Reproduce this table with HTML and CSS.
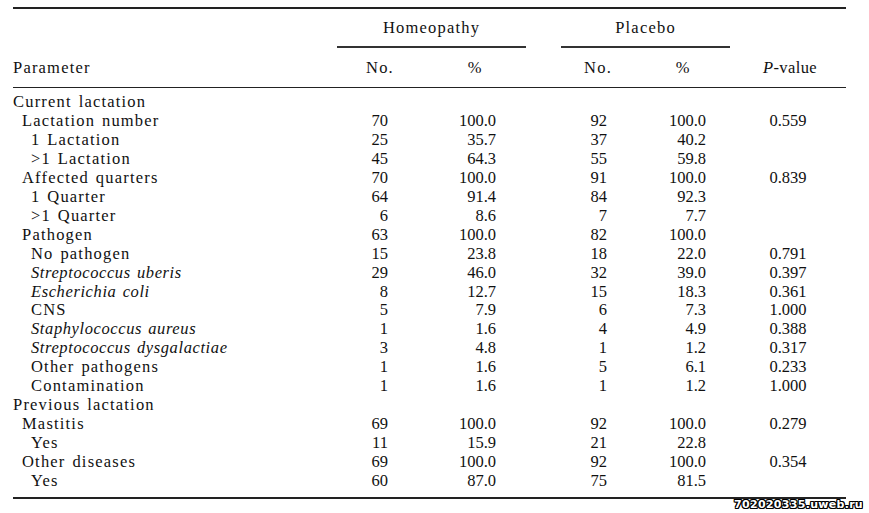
FILE: index.html
```html
<!DOCTYPE html>
<html lang="en">
<head>
<meta charset="utf-8">
<title>Table</title>
<link rel="stylesheet" href="styles.css">
</head>
<body>
<div class="page">
  <div class="wrap">
    <table class="tbl">
      <colgroup>
        <col class="c-param"><col class="c-hno"><col class="c-hpct"><col class="c-gap"><col class="c-pno"><col class="c-ppct"><col class="c-pv">
      </colgroup>
      <thead>
        <tr class="grp">
          <th></th>
          <th colspan="2" class="span lbl">Homeopathy</th>
          <th></th>
          <th colspan="2" class="span lbl">Placebo</th>
          <th></th>
        </tr>
        <tr class="sub">
          <th class="param lbl">Parameter</th>
          <th class="ctr lbl">No.</th>
          <th class="ctr">%</th>
          <th></th>
          <th class="ctr lbl">No.</th>
          <th class="ctr">%</th>
          <th class="pvh lbl"><i>P</i>-value</th>
        </tr>
      </thead>
      <tbody>
        <tr class="first"><td class="param lbl l0">Current lactation</td><td></td><td></td><td></td><td></td><td></td><td></td></tr>
        <tr><td class="param lbl l1">Lactation number</td><td class="n hno">70</td><td class="n hpct">100.0</td><td></td><td class="n pno">92</td><td class="n ppct">100.0</td><td class="pv">0.559</td></tr>
        <tr><td class="param lbl l2">1 Lactation</td><td class="n hno">25</td><td class="n hpct">35.7</td><td></td><td class="n pno">37</td><td class="n ppct">40.2</td><td class="pv"></td></tr>
        <tr><td class="param lbl l2">&gt;1 Lactation</td><td class="n hno">45</td><td class="n hpct">64.3</td><td></td><td class="n pno">55</td><td class="n ppct">59.8</td><td class="pv"></td></tr>
        <tr><td class="param lbl l1">Affected quarters</td><td class="n hno">70</td><td class="n hpct">100.0</td><td></td><td class="n pno">91</td><td class="n ppct">100.0</td><td class="pv">0.839</td></tr>
        <tr><td class="param lbl l2">1 Quarter</td><td class="n hno">64</td><td class="n hpct">91.4</td><td></td><td class="n pno">84</td><td class="n ppct">92.3</td><td class="pv"></td></tr>
        <tr><td class="param lbl l2">&gt;1 Quarter</td><td class="n hno">6</td><td class="n hpct">8.6</td><td></td><td class="n pno">7</td><td class="n ppct">7.7</td><td class="pv"></td></tr>
        <tr><td class="param lbl l1">Pathogen</td><td class="n hno">63</td><td class="n hpct">100.0</td><td></td><td class="n pno">82</td><td class="n ppct">100.0</td><td class="pv"></td></tr>
        <tr><td class="param lbl l2">No pathogen</td><td class="n hno">15</td><td class="n hpct">23.8</td><td></td><td class="n pno">18</td><td class="n ppct">22.0</td><td class="pv">0.791</td></tr>
        <tr><td class="param it l2">Streptococcus uberis</td><td class="n hno">29</td><td class="n hpct">46.0</td><td></td><td class="n pno">32</td><td class="n ppct">39.0</td><td class="pv">0.397</td></tr>
        <tr><td class="param it l2">Escherichia coli</td><td class="n hno">8</td><td class="n hpct">12.7</td><td></td><td class="n pno">15</td><td class="n ppct">18.3</td><td class="pv">0.361</td></tr>
        <tr><td class="param lbl l2">CNS</td><td class="n hno">5</td><td class="n hpct">7.9</td><td></td><td class="n pno">6</td><td class="n ppct">7.3</td><td class="pv">1.000</td></tr>
        <tr><td class="param it l2">Staphylococcus aureus</td><td class="n hno">1</td><td class="n hpct">1.6</td><td></td><td class="n pno">4</td><td class="n ppct">4.9</td><td class="pv">0.388</td></tr>
        <tr><td class="param it l2">Streptococcus dysgalactiae</td><td class="n hno">3</td><td class="n hpct">4.8</td><td></td><td class="n pno">1</td><td class="n ppct">1.2</td><td class="pv">0.317</td></tr>
        <tr><td class="param lbl l2">Other pathogens</td><td class="n hno">1</td><td class="n hpct">1.6</td><td></td><td class="n pno">5</td><td class="n ppct">6.1</td><td class="pv">0.233</td></tr>
        <tr><td class="param lbl l2">Contamination</td><td class="n hno">1</td><td class="n hpct">1.6</td><td></td><td class="n pno">1</td><td class="n ppct">1.2</td><td class="pv">1.000</td></tr>
        <tr><td class="param lbl l0">Previous lactation</td><td></td><td></td><td></td><td></td><td></td><td></td></tr>
        <tr><td class="param lbl l1">Mastitis</td><td class="n hno">69</td><td class="n hpct">100.0</td><td></td><td class="n pno">92</td><td class="n ppct">100.0</td><td class="pv">0.279</td></tr>
        <tr><td class="param lbl l2">Yes</td><td class="n hno">11</td><td class="n hpct">15.9</td><td></td><td class="n pno">21</td><td class="n ppct">22.8</td><td class="pv"></td></tr>
        <tr><td class="param lbl l1">Other diseases</td><td class="n hno">69</td><td class="n hpct">100.0</td><td></td><td class="n pno">92</td><td class="n ppct">100.0</td><td class="pv">0.354</td></tr>
        <tr class="last"><td class="param lbl l2">Yes</td><td class="n hno">60</td><td class="n hpct">87.0</td><td></td><td class="n pno">75</td><td class="n ppct">81.5</td><td class="pv"></td></tr>
      </tbody>
    </table>
  </div>
  <div class="watermark">702020335.uweb.ru</div>
</div>
</body>
</html>
```
FILE: styles.css
```css
html, body {
  margin: 0;
  padding: 0;
  background: #ffffff;
}

.page {
  position: relative;
  width: 869px;
  height: 513px;
  overflow: hidden;
  font-family: "Liberation Serif", "Times New Roman", serif;
  font-size: 16.5px;
  color: #111111;
}

.wrap {
  margin: 7px 0 0 13px;
  width: 833px;
  border-top: 2px solid #222;
  border-bottom: 2px solid #222;
}

.tbl {
  width: 833px;
  table-layout: fixed;
  border-collapse: separate;
  border-spacing: 0;
}

.c-param { width: 324px; }
.c-hno { width: 86px; }
.c-hpct { width: 103px; }
.c-gap { width: 35px; }
.c-pno { width: 74px; }
.c-ppct { width: 95px; }
.c-pv { width: 116px; }

.tbl th,
.tbl td {
  padding: 0;
  font-weight: normal;
  white-space: nowrap;
}

.tbl th {
  line-height: 19px;
}

.lbl {
  letter-spacing: 1.2px;
  word-spacing: 1.5px;
}

.it {
  font-style: italic;
  letter-spacing: 0.6px;
  word-spacing: 1.5px;
}

.grp th {
  height: 37px;
  vertical-align: middle;
  text-align: center;
}

.grp th.span {
  border-bottom: 2px solid #333;
}

.sub th {
  height: 39px;
  vertical-align: middle;
  border-bottom: 1px solid #222;
}

.sub th.param { text-align: left; }
.sub th.ctr { text-align: center; }
.sub th.pvh { text-align: center; padding-left: 4px; letter-spacing: 0.4px; }

.tbl td {
  height: 18.95px;
  line-height: 18.95px;
  vertical-align: top;
}

.first td { padding-top: 5px; }
.last td { padding-bottom: 6px; }

.param { text-align: left; }
.l0 { padding-left: 0; }
.tbl td.l1 { padding-left: 9px; }
.tbl td.l2 { padding-left: 18px; }

.n { text-align: right; }
.tbl td.hno { padding-right: 35px; }
.tbl td.hpct { padding-right: 30px; }
.tbl td.pno { padding-right: 28px; }
.tbl td.ppct { padding-right: 24px; }

.pv {
  text-align: center;
  padding-left: 4px;
}

.watermark {
  position: absolute;
  right: 6px;
  bottom: 2px;
  font-family: "DejaVu Sans", Verdana, sans-serif;
  font-weight: bold;
  font-size: 11px;
  line-height: 12px;
  letter-spacing: 0.3px;
  color: #ffffff;
  text-shadow:
    1px 0 0 #000, -1px 0 0 #000, 0 1px 0 #000, 0 -1px 0 #000,
    1px 1px 0 #000, -1px -1px 0 #000, 1px -1px 0 #000, -1px 1px 0 #000;
}
```
